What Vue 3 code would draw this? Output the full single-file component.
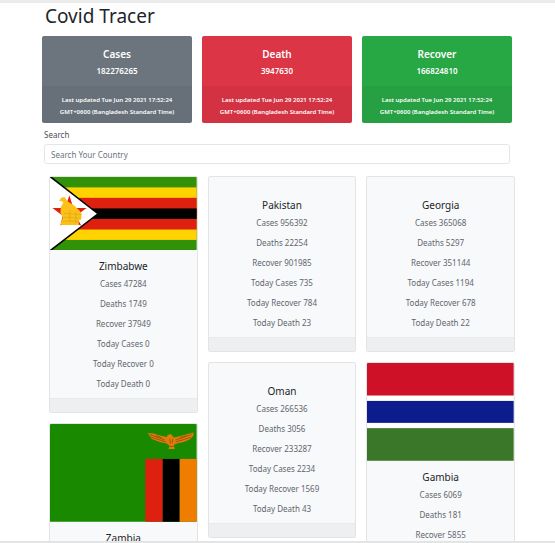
<script setup>
const updated = 'Last updated Tue Jun 29 2021 17:52:24 GMT+0600 (Bangladesh Standard Time)'

const totals = [
  { title: 'Cases', value: 182276265, tone: 'secondary' },
  { title: 'Death', value: 3947630, tone: 'danger' },
  { title: 'Recover', value: 166824810, tone: 'success' },
]

const columns = [
  [
    { name: 'Zimbabwe', flag: 'zw', cases: 47284, deaths: 1749, recovered: 37949, todayCases: 0, todayRecovered: 0, todayDeaths: 0 },
    { name: 'Zambia', flag: 'zm' },
  ],
  [
    { name: 'Pakistan', cases: 956392, deaths: 22254, recovered: 901985, todayCases: 735, todayRecovered: 784, todayDeaths: 23 },
    { name: 'Oman', cases: 266536, deaths: 3056, recovered: 233287, todayCases: 2234, todayRecovered: 1569, todayDeaths: 43 },
  ],
  [
    { name: 'Georgia', cases: 365068, deaths: 5297, recovered: 351144, todayCases: 1194, todayRecovered: 678, todayDeaths: 22 },
    { name: 'Gambia', flag: 'gm', cases: 6069, deaths: 181, recovered: 5855 },
  ],
]

const labels = {
  cases: 'Cases',
  deaths: 'Deaths',
  recovered: 'Recover',
  todayCases: 'Today Cases',
  todayRecovered: 'Today Recover',
  todayDeaths: 'Today Death',
}

const rows = (country) =>
  Object.keys(labels)
    .filter((key) => country[key] !== undefined)
    .map((key) => `${labels[key]} ${country[key]}`)
</script>

<template>
  <div class="page">
    <main class="container">
      <h1 class="heading">Covid Tracer</h1>

      <section class="totals">
        <article v-for="total in totals" :key="total.title" class="total" :class="total.tone">
          <div class="total-body">
            <h2 class="total-title">{{ total.title }}</h2>
            <p class="total-value">{{ total.value }}</p>
          </div>
          <footer class="total-footer">{{ updated }}</footer>
        </article>
      </section>

      <form class="search" @submit.prevent>
        <label for="country-search" class="search-label">Search</label>
        <input id="country-search" class="search-input" type="text" placeholder="Search Your Country" />
      </form>

      <section class="countries">
        <div v-for="(column, index) in columns" :key="index" class="column">
          <article v-for="country in column" :key="country.name" class="card">
            <svg v-if="country.flag === 'zw'" class="flag" viewBox="0 0 148 74" aria-hidden="true">
              <rect width="148" height="74" fill="#319208" />
              <rect y="10.5" width="148" height="53" fill="#ffd200" />
              <rect y="21" width="148" height="32" fill="#de2010" />
              <rect y="31.7" width="148" height="10.6" fill="#000" />
              <path d="M0 0H2L49.500 37L2 74H0Z" fill="#000" />
              <path d="M0 .5L47.300 37L0 73.500Z" fill="#fff" />
              <path d="M19.500 18.500L23.600 31.200H37L26.200 39.100L31.500 49L19.500 45L10.500 49L12.800 39.100L2.500 31.200H15.400Z" fill="#de2010" />
              <path d="M9 24L12 20.500L15 20.500L17.500 24.500L24 28.500L29.500 33.500L32 37L31.500 43L29 44V48.500H13.500L10.500 48L13 41L10.500 36L11 30L13.500 26L12 24.500Z" fill="#fbc119" />
              <path d="M14 36.500L31 38M14 40.500L30 41.500M13 44.500H29M20 33V46M26 35V47" fill="none" stroke="#d09a12" stroke-width=".5" />
            </svg>
            <svg v-else-if="country.flag === 'zm'" class="flag" viewBox="0 0 147 98" aria-hidden="true">
              <rect width="147" height="98" fill="#198a00" />
              <rect x="95.500" y="35" width="17.500" height="63" fill="#de2010" />
              <rect x="113" y="35" width="17" height="63" fill="#000" />
              <rect x="130" y="35" width="17" height="63" fill="#ef7d00" />
              <path d="M98 9L104 9.500L110 11.500L117 13L118 11L121 10L123 12L124 13.500L131 12L138 10L144 8.500L143.500 12L140 15.500L134 18L127 19.500L124 21L125 25H118.500L120 22L117 19.500L110 18L102 15Z" fill="#e07a08" />
              <path d="M100 10.500L115 16M101 13L116 18M106 11.500L112 14M142 10.500L126 16M141 13.500L126 18M137 11.500L130 14M120 15L121 20M123 15L122.500 19M120 22.500H124" fill="none" stroke="#8f4f0c" stroke-width=".8" />
            </svg>
            <svg v-else-if="country.flag === 'gm'" class="flag" viewBox="0 0 147 98" aria-hidden="true">
              <rect width="147" height="98" fill="#fff" />
              <rect width="147" height="32.600" fill="#ce1126" />
              <rect y="38" width="147" height="22" fill="#0c1c8c" />
              <rect y="65.300" width="147" height="32.700" fill="#3a7728" />
            </svg>
            <div v-else class="flag-empty"></div>
            <div class="card-body">
              <h2 class="card-title">{{ country.name }}</h2>
              <p v-for="row in rows(country)" :key="row" class="card-row">{{ row }}</p>
            </div>
            <footer class="card-footer"></footer>
          </article>
        </div>
      </section>
    </main>
  </div>
</template>

<style>
body {
  margin: 0;
  background: #fff;
}
</style>

<style scoped>
.page {
  box-sizing: border-box;
  height: 100vh;
  overflow: hidden;
  border-top: 3px solid #ebebeb;
  border-bottom: 2px solid #e4e4e4;
  color: #212529;
  font-family: "Noto Sans", "Open Sans", sans-serif;
  font-size: 8px;
  line-height: 12px;
}

.container {
  padding: 0 43px 0 42px;
}

h1,
h2,
p {
  margin: 0;
}

.heading {
  padding: 1px 3px 8px;
  font-size: 19px;
  font-weight: 400;
  line-height: 24px;
}

.totals {
  display: grid;
  grid-template-columns: repeat(3, 1fr);
  gap: 10px;
}

.total {
  overflow: hidden;
  border-radius: 2px;
  color: #fff;
  text-align: center;
}

.secondary {
  background: #6c757d;
}

.danger {
  background: #dc3545;
}

.success {
  background: #28a745;
}

.total-body {
  padding: 12px 10px 9px;
}

.total-title {
  margin-bottom: 5px;
  font-size: 10px;
  font-weight: 600;
  line-height: 12px;
}

.total-value {
  font-weight: 600;
}

.total-footer {
  padding: 8px 16px 5px;
  background: rgba(0, 0, 0, 0.04);
  font-size: 6px;
  font-weight: 600;
}

.search {
  display: flex;
  flex-direction: column;
  gap: 3px;
  margin: 6px 2px 12px 2px;
}

.search-label {
  color: #495057;
}

.search-input {
  box-sizing: border-box;
  width: 100%;
  height: 20px;
  padding: 0 6px;
  border: 1px solid #e3e6e9;
  border-radius: 3px;
  background: #fff;
  font: inherit;
}

.search-input::placeholder {
  color: #6c757d;
  opacity: 1;
}

.countries {
  display: grid;
  grid-template-columns: repeat(3, 1fr);
  gap: 10px;
  margin: 0 -3px 0 7px;
}

.column {
  display: flex;
  flex-direction: column;
  gap: 10px;
}

.card {
  overflow: hidden;
  border: 1px solid #e2e4e6;
  border-radius: 2px;
  background: #f8f9fb;
  text-align: center;
}

.flag {
  display: block;
  width: 100%;
}

.flag-empty {
  height: 12px;
}

.card-body {
  padding: 10px 10px 0;
}

.card-title {
  margin-bottom: 6px;
  font-size: 10px;
  font-weight: 400;
  line-height: 12px;
}

.card-row {
  margin-bottom: 8px;
  color: #5f666d;
}

.card-footer {
  height: 13px;
  border-top: 1px solid #e8eaec;
  background: #eeeff1;
}
</style>
